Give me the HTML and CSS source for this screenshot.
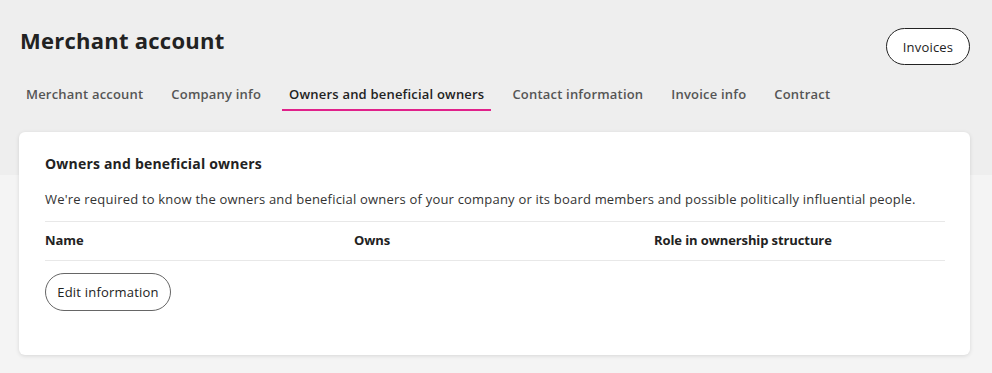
FILE: index.html
```html
<!DOCTYPE html>
<html lang="en">

<head>
    <meta charset="UTF-8">
    <meta name="viewport" content="width=device-width, initial-scale=1.0">
    <title>Merchant account</title>
    <link rel="stylesheet" href="styles.css">
</head>

<body>

    <div class="topo">
        <h1 class="titulo">Merchant account</h1>
        <button class="botao-invoices">Invoices</button>
    </div>

    <nav class="abas">
        <a class="aba">Merchant account</a>
        <a class="aba">Company info</a>
        <a class="aba aba-ativa">Owners and beneficial owners</a>
        <a class="aba">Contact information</a>
        <a class="aba">Invoice info</a>
        <a class="aba">Contract</a>
    </nav>

    <div class="cartao">
        <h2 class="cartao-titulo">Owners and beneficial owners</h2>
        <p class="cartao-texto">We're required to know the owners and beneficial owners of your company or its board members and possible politically influential people.</p>

        <div class="tabela-cabecalho">
            <span>Name</span>
            <span>Owns</span>
            <span>Role in ownership structure</span>
        </div>

        <button class="botao-editar">Edit information</button>
    </div>

</body>

</html>
```

FILE: styles.css
```css
* {
    margin: 0;
    padding: 0;
    box-sizing: border-box;
    font-family: 'Open Sans', sans-serif;
    letter-spacing: 0.2px;
}

body {
    width: 992px;
    height: 373px;
    overflow: hidden;
    padding: 0 22px 0 19px;
    background: linear-gradient(#eeeeee 0, #eeeeee 175px, #f4f4f4 175px);
    color: #222;
}

.topo {
    display: flex;
    justify-content: space-between;
    align-items: flex-start;
    padding-top: 28px;
}

.titulo {
    font-size: 22px;
    font-weight: 700;
    color: #222;
    margin-left: 1px;
    margin-top: -1px;
    line-height: 26px;
    letter-spacing: 0.25px;
}

.botao-invoices {
    border: 1px solid #222;
    background-color: white;
    border-radius: 25px;
    height: 37px;
    width: 84px;
    font-size: 13px;
    color: #222;
}

.abas {
    display: flex;
    gap: 14px;
    margin-top: 12px;
}

.aba {
    font-size: 13px;
    font-weight: 600;
    color: #555;
    padding: 8px 7px 6px 7px;
    border-bottom: 2px solid transparent;
    letter-spacing: 0.2px;
}

.aba-ativa {
    color: #222;
    border-bottom-color: #e0218a;
}

.cartao {
    margin-top: 21px;
    background-color: white;
    border-radius: 6px;
    box-shadow: 0 1px 4px rgba(0, 0, 0, 0.12);
    padding: 24px 25px 44px 26px;
}

.cartao-titulo {
    font-size: 14px;
    font-weight: 700;
    line-height: 16px;
}

.cartao-texto {
    font-size: 13px;
    color: #333;
    margin-top: 19px;
    line-height: 16px;
}

.tabela-cabecalho {
    display: grid;
    grid-template-columns: 309px 300px 1fr;
    border-top: 1px solid #e8e8e8;
    border-bottom: 1px solid #e8e8e8;
    margin-top: 14px;
    padding: 10px 0 11px 0;
    font-size: 13px;
    font-weight: 700;
    line-height: 17px;
}

.tabela-cabecalho span {
    letter-spacing: -0.1px;
}

.botao-editar {
    margin-top: 12px;
    border: 1px solid #666;
    background-color: white;
    border-radius: 25px;
    height: 38px;
    width: 126px;
    font-size: 13px;
    color: #222;
}
```
